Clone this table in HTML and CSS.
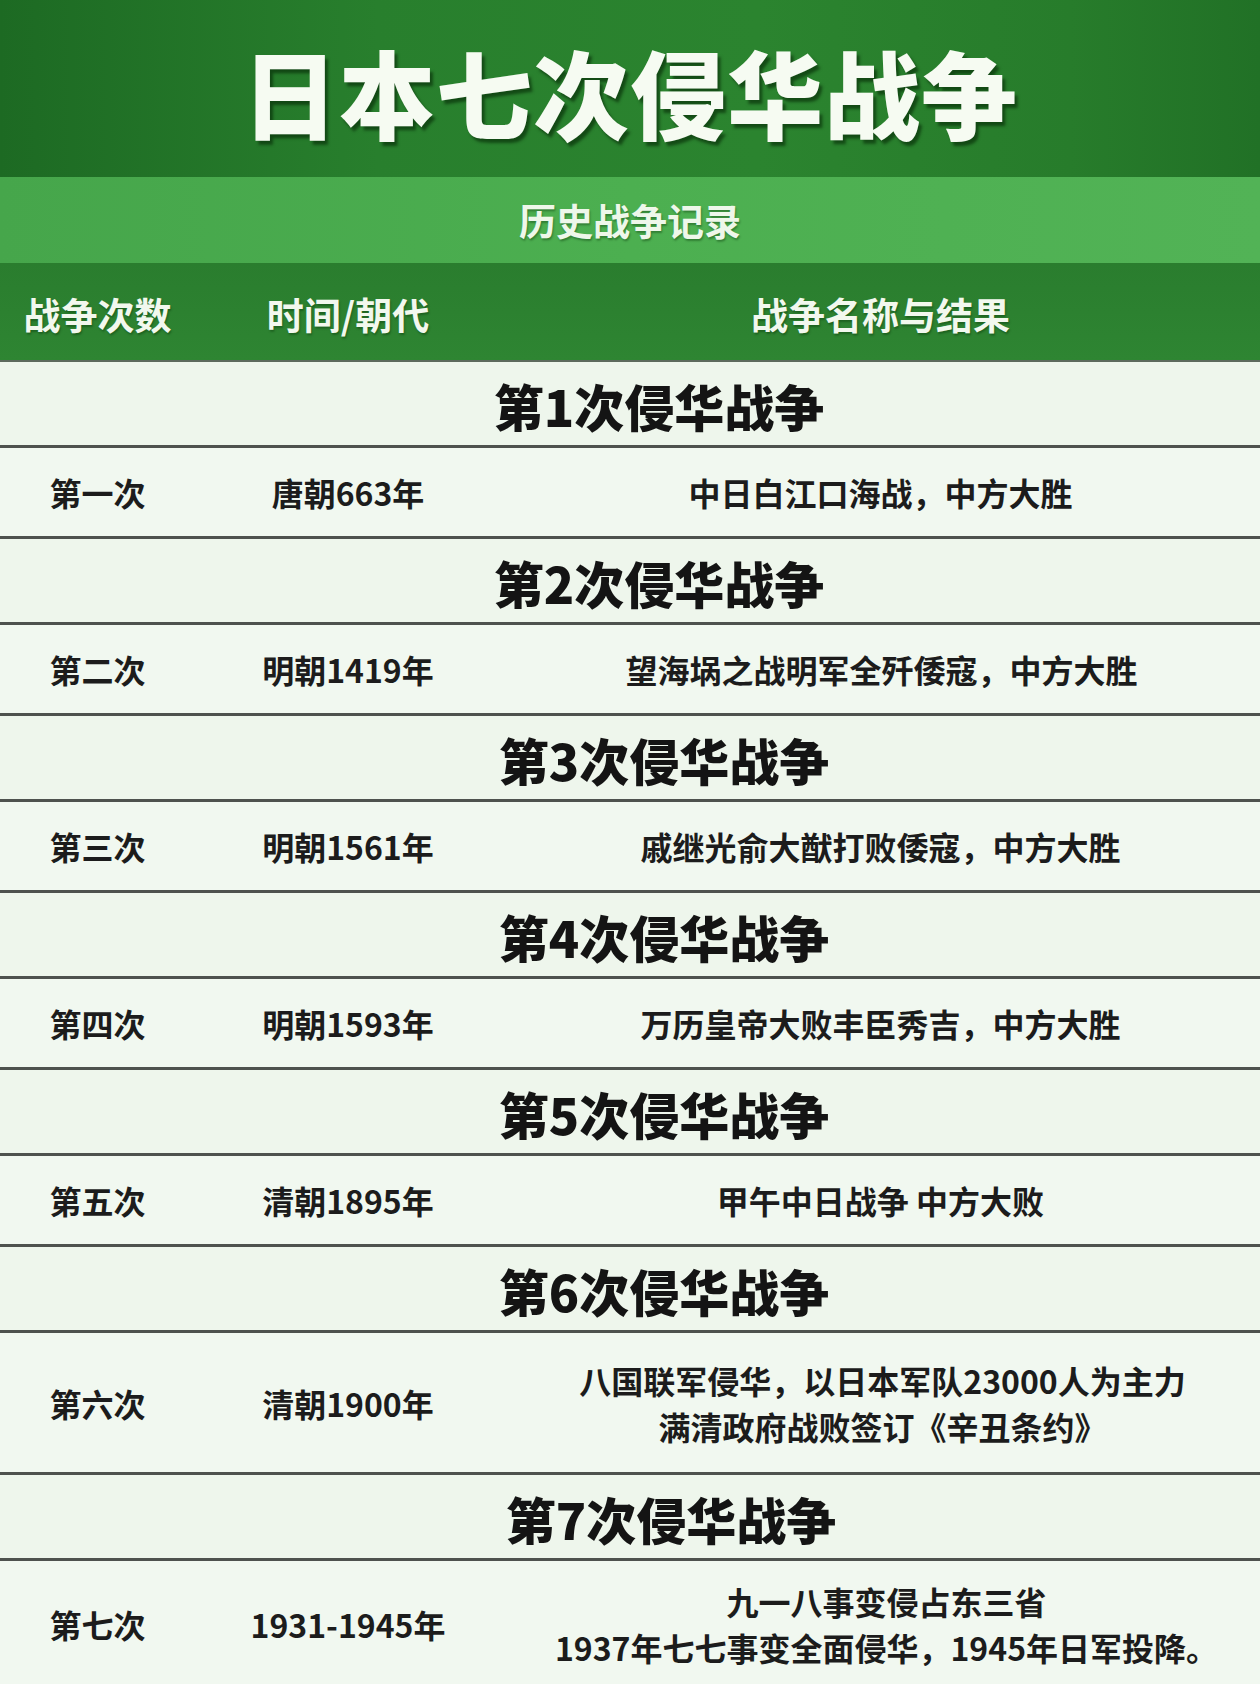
FILE: index.html
```html
<!DOCTYPE html>
<html lang="zh-CN">
<head>
<meta charset="utf-8">
<title>日本七次侵华战争</title>
<link rel="stylesheet" href="styles.css">
</head>
<body>
<div class="page">
  <header class="title-band"><h1 class="title">日本七次侵华战争</h1></header>
  <div class="subtitle-band">历史战争记录</div>
  <div class="head-row cols">
    <div class="cell">战争次数</div>
    <div class="cell">时间/朝代</div>
    <div class="cell">战争名称与结果</div>
  </div>
  <div class="table">
    <div class="section">第1次侵华战争</div>
    <div class="data cols">
      <div class="cell">第一次</div>
      <div class="cell">唐朝663年</div>
      <div class="cell">中日白江口海战，中方大胜</div>
    </div>
    <div class="section">第2次侵华战争</div>
    <div class="data cols">
      <div class="cell">第二次</div>
      <div class="cell">明朝1419年</div>
      <div class="cell res-2">望海埚之战明军全歼倭寇，中方大胜</div>
    </div>
    <div class="section s3">第3次侵华战争</div>
    <div class="data cols">
      <div class="cell">第三次</div>
      <div class="cell">明朝1561年</div>
      <div class="cell res-3">戚继光俞大猷打败倭寇，中方大胜</div>
    </div>
    <div class="section s4">第4次侵华战争</div>
    <div class="data cols">
      <div class="cell">第四次</div>
      <div class="cell">明朝1593年</div>
      <div class="cell res-3">万历皇帝大败丰臣秀吉，中方大胜</div>
    </div>
    <div class="section s4">第5次侵华战争</div>
    <div class="data cols">
      <div class="cell">第五次</div>
      <div class="cell">清朝1895年</div>
      <div class="cell res-3">甲午中日战争 中方大败</div>
    </div>
    <div class="section s4">第6次侵华战争</div>
    <div class="data tall cols">
      <div class="cell">第六次</div>
      <div class="cell">清朝1900年</div>
      <div class="cell multi res-6">八国联军侵华，以日本军队23000人为主力<br>满清政府战败签订《辛丑条约》</div>
    </div>
    <div class="section s7">第7次侵华战争</div>
    <div class="data last cols">
      <div class="cell">第七次</div>
      <div class="cell">1931-1945年</div>
      <div class="cell multi res-7">九一八事变侵占东三省<br>1937年七七事变全面侵华，1945年日军投降。</div>
    </div>
  </div>
</div>
</body>
</html>
```
FILE: styles.css
```css
* { box-sizing: border-box; }
html, body { margin: 0; padding: 0; }
body {
  width: 1260px;
  font-family: "Noto Sans CJK SC", "Noto Sans", sans-serif;
  background: #eef6ec;
}
.page { width: 1260px; overflow: hidden; }

.title-band {
  height: 177px;
  display: flex;
  align-items: center;
  justify-content: center;
  background: linear-gradient(90deg, #1d6a23 0%, #287f2d 30%, #2b842f 60%, #277c2b 85%, #217126 100%);
}
.title {
  margin: 0;
  padding-top: 4px;
  font-size: 96px;
  font-weight: 900;
  color: #f6fbf2;
  letter-spacing: 1px;
  text-shadow: 3px 4px 3px rgba(0, 30, 0, 0.55);
}

.subtitle-band {
  height: 86px;
  display: flex;
  align-items: center;
  justify-content: center;
  font-size: 37px;
  font-weight: 700;
  color: #eef7ea;
  text-shadow: 1px 2px 2px rgba(0, 40, 0, 0.35);
  background: linear-gradient(90deg, #46a64b 0%, #4caf50 50%, #52b356 100%);
}

.cols {
  display: grid;
  grid-template-columns: 195px 306px 1fr;
  align-items: center;
}
.cell { text-align: center; }

.head-row {
  height: 99px;
  padding-top: 4px;
  background: linear-gradient(180deg, #2a7d2e 0%, #2e8532 100%);
  border-bottom: 2px solid #5d6a5d;
  font-size: 37px;
  font-weight: 700;
  color: #f2f8ee;
  text-shadow: 1px 2px 2px rgba(0, 40, 0, 0.35);
}

.table { background: #eff7ee; }

.section {
  height: 86px;
  padding-left: 58px;
  padding-top: 2px;
  display: flex;
  align-items: center;
  justify-content: center;
  font-size: 50px;
  font-weight: 900;
  color: #141414;
  border-bottom: 3px solid #4e524e;
  background: #eef6ec;
}
.section.s3, .section.s4 { padding-left: 68px; }
.section.s7 { padding-left: 82px; }

.data {
  height: 91px;
  font-size: 32px;
  font-weight: 700;
  color: #1c1c1c;
  border-bottom: 3px solid #4e524e;
  background: #f1f8f0;
}
.data.tall { height: 142px; }
.data.last { height: 126px; border-bottom: none; }

.res-2 { padding-left: 2px; }
.res-6 { padding-left: 4px; }
.res-7 { padding-left: 12px; }
.multi { line-height: 46px; }
```
